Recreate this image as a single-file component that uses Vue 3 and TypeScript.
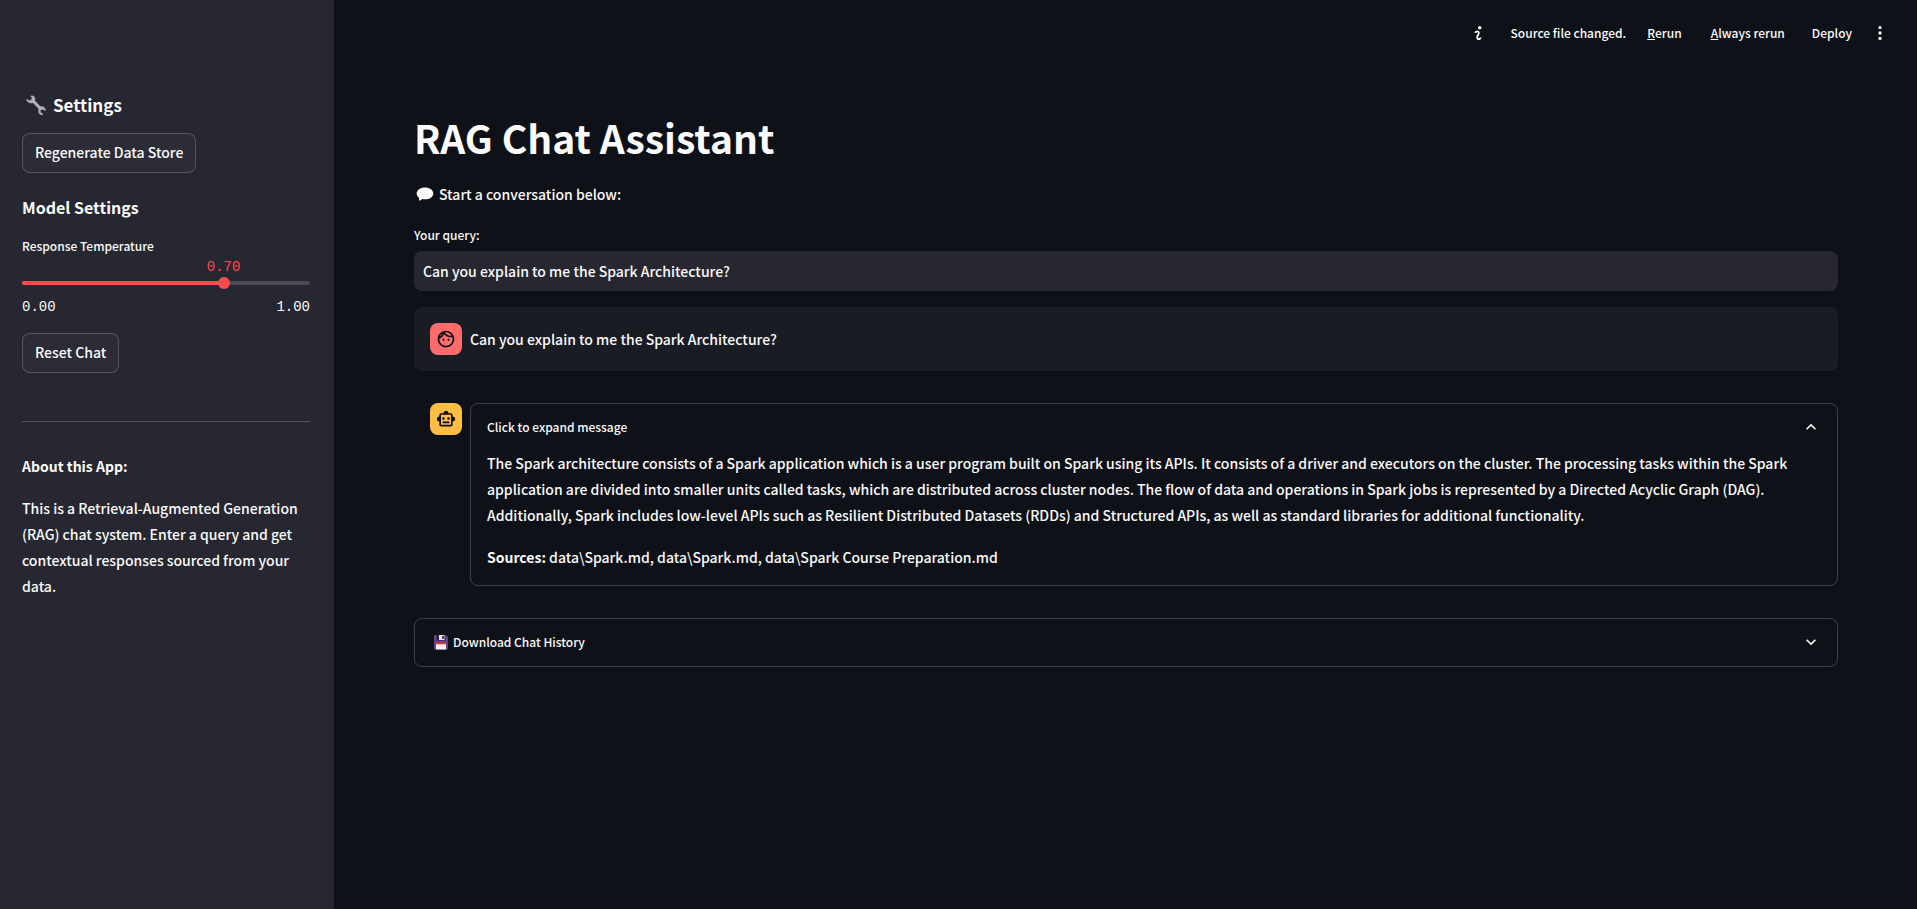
<script setup lang="ts">
import { computed, ref } from 'vue'

const temperature = ref(0.7)
const query = ref('Can you explain to me the Spark Architecture?')
const question = 'Can you explain to me the Spark Architecture?'
const answer =
  'The Spark architecture consists of a Spark application which is a user program built on Spark using its APIs. It consists of a driver and executors on the cluster. The processing tasks within the Spark application are divided into smaller units called tasks, which are distributed across cluster nodes. The flow of data and operations in Spark jobs is represented by a Directed Acyclic Graph (DAG). Additionally, Spark includes low-level APIs such as Resilient Distributed Datasets (RDDs) and Structured APIs, as well as standard libraries for additional functionality.'
const sources = ['data\\Spark.md', 'data\\Spark.md', 'data\\Spark Course Preparation.md']

const fill = computed(() => `${temperature.value * 100}%`)
const sourceList = sources.join(', ')
</script>

<template>
  <div class="app">
    <aside class="sidebar">
      <h2 class="side-title">
        <svg class="wrench" viewBox="0 0 20 20" aria-hidden="true">
          <path
            d="M5.4 0.4C7.6 0.2 9.4 1.8 9.2 4.2L8.9 5.5L14.3 11.3C16.6 10.7 19.2 12.2 19.8 14.6L19.4 16L17.2 14.4L14.7 15L14.6 17.2L17.2 18.8L16.4 19.9C13.9 20 11.9 18 12.4 15.4L12.5 13.8L6.9 7.9C4.3 9 1.1 7.6 0.4 4.8L0.9 3.8L3.2 5.4L5.5 4.6L5.8 2.7L4.4 1.3Z"
          />
        </svg>
        Settings
      </h2>
      <button class="btn" type="button">Regenerate Data Store</button>

      <h3 class="side-subtitle">Model Settings</h3>
      <label class="field-label" for="temperature">Response Temperature</label>
      <div class="slider">
        <output class="slider-value" for="temperature" :style="{ left: fill }">{{ temperature.toFixed(2) }}</output>
        <div class="rail"><div class="rail-fill" :style="{ width: fill }"></div></div>
        <input id="temperature" v-model.number="temperature" type="range" min="0" max="1" step="0.01" />
      </div>
      <div class="bounds"><span>0.00</span><span>1.00</span></div>
      <button class="btn" type="button">Reset Chat</button>

      <hr class="divider" />
      <p class="about-title"><strong>About this App:</strong></p>
      <p class="about">
        This is a Retrieval-Augmented Generation (RAG) chat system. Enter a query and get contextual responses sourced
        from your data.
      </p>
    </aside>

    <div class="page">
      <header class="toolbar">
        <svg class="info" viewBox="0 0 8 8" aria-hidden="true">
          <path
            d="M5 0c-.55 0-1 .45-1 1s.45 1 1 1 1-.45 1-1-.45-1-1-1zm-1.500 2.500c-.83 0-1.500.67-1.500 1.500h1c0-.28.22-.5.5-.5s.5.22.5.5-1 1.640-1 2.500c0 .86.67 1.500 1.500 1.500s1.500-.67 1.500-1.500h-1c0 .28-.22.5-.5.5s-.5-.22-.5-.5c0-.36 1-1.840 1-2.500 0-.81-.67-1.500-1.500-1.500z"
          />
        </svg>
        <span class="status">Source file changed.</span>
        <button class="tool rerun" type="button"><u>R</u>erun</button>
        <button class="tool always" type="button"><u>A</u>lways rerun</button>
        <button class="tool deploy" type="button">Deploy</button>
        <button class="tool" type="button" aria-label="Main menu">
          <svg class="dots" viewBox="0 0 24 24" aria-hidden="true">
            <circle cx="12" cy="5.500" r="2" />
            <circle cx="12" cy="12" r="2" />
            <circle cx="12" cy="18.500" r="2" />
          </svg>
        </button>
      </header>

      <main class="content">
        <h1 class="title">RAG Chat Assistant</h1>
        <p class="intro">
          <svg class="bubble" viewBox="0 0 18 14" aria-hidden="true">
            <path
              d="M9 0.400C13.700 0.400 17.300 3 17.300 6.400C17.300 9.800 13.700 12.300 9 12.300C7.900 12.300 6.900 12.200 6 11.900C5.200 12.900 4.100 13.500 2.800 13.600C3.200 12.700 3.300 11.700 3 10.700C1.500 9.600 0.700 8.100 0.700 6.400C0.700 3 4.300 0.400 9 0.400Z"
            />
          </svg>
          Start a conversation below:
        </p>

        <label class="field-label" for="query">Your query:</label>
        <input id="query" v-model="query" class="query" type="text" />

        <section class="message user">
          <div class="avatar avatar-user">
            <svg viewBox="0 0 24 24" aria-hidden="true">
              <path
                d="M10.250 13c0 .69-.56 1.250-1.250 1.250S7.750 13.690 7.750 13 8.310 11.750 9 11.750s1.250.56 1.250 1.250zM15 11.750c-.69 0-1.250.56-1.250 1.250s.56 1.250 1.250 1.250 1.250-.56 1.250-1.250-.56-1.250-1.250-1.250zm7 .25c0 5.520-4.480 10-10 10S2 17.520 2 12 6.480 2 12 2s10 4.480 10 10zM10.660 4.120C12.060 6.440 14.600 8 17.500 8c.46 0 .91-.05 1.340-.12C17.440 5.560 14.900 4 12 4c-.46 0-.91.05-1.340.12zM4.420 9.470a8.046 8.046 0 0 0 3.660-4.440 8.046 8.046 0 0 0-3.660 4.440zM20 12c0-.78-.12-1.530-.33-2.240-.7.15-1.420.24-2.170.24a10 10 0 0 1-7.760-3.690A10.016 10.016 0 0 1 4 11.860c.01.04 0 .09 0 .14 0 4.410 3.590 8 8 8s8-3.590 8-8z"
              />
            </svg>
          </div>
          <p class="message-text">{{ question }}</p>
        </section>

        <section class="message">
          <div class="avatar avatar-bot">
            <svg viewBox="0 0 24 24" aria-hidden="true">
              <path
                d="M20 9V7c0-1.100-.9-2-2-2h-3c0-1.660-1.340-3-3-3S9 3.340 9 5H6c-1.100 0-2 .9-2 2v2c-1.660 0-3 1.340-3 3s1.340 3 3 3v4c0 1.100.9 2 2 2h12c1.100 0 2-.9 2-2v-4c1.660 0 3-1.340 3-3s-1.340-3-3-3zm-2 10H6V7h12v12zM9 13c-.83 0-1.500-.67-1.500-1.500S8.170 10 9 10s1.500.67 1.500 1.500S9.830 13 9 13zm7.500-1.500c0 .83-.67 1.500-1.500 1.500s-1.500-.67-1.500-1.500.67-1.500 1.500-1.500 1.500.67 1.500 1.500zM8 15h8v2H8v-2z"
              />
            </svg>
          </div>
          <details class="expander" open>
            <summary>
              <span>Click to expand message</span>
              <svg class="chevron" viewBox="0 0 24 24" aria-hidden="true">
                <path d="M16.590 8.590 12 13.170 7.410 8.590 6 10l6 6 6-6z" />
              </svg>
            </summary>
            <div class="expander-body">
              <p>{{ answer }}</p>
              <p><strong>Sources:</strong> {{ sourceList }}</p>
            </div>
          </details>
        </section>

        <details class="expander">
          <summary>
            <span class="download">
              <svg class="floppy" viewBox="0 0 14 16" aria-hidden="true">
                <path fill="#5b4a85" d="M1 1H12L14 3V15.500H0V2Z" />
                <path fill="#321b41" d="M2.500 1H11.500V6.500H2.500Z" />
                <path fill="#e6e6e6" d="M5 1H10.500V6H5Z" />
                <path fill="#321b41" d="M8.200 2H9.800V5H8.200Z" />
                <path fill="#f4f4f4" d="M2 9H12V15.500H2Z" />
                <path fill="#f8312f" d="M2 8.500H12V10.300H2Z" />
              </svg>
              Download Chat History
            </span>
            <svg class="chevron" viewBox="0 0 24 24" aria-hidden="true">
              <path d="M16.590 8.590 12 13.170 7.410 8.590 6 10l6 6 6-6z" />
            </svg>
          </summary>
        </details>
      </main>
    </div>
  </div>
</template>

<style>
body {
  margin: 0;
  background: #0e1117;
}
</style>

<style scoped>
.app {
  display: flex;
  min-height: 100vh;
  background: #0e1117;
  color: #fafafa;
  font-family: "Noto Sans CJK SC", "Noto Sans", sans-serif;
  font-size: 14px;
  font-weight: 500;
  line-height: 26px;
}
.app *,
.app {
  box-sizing: border-box;
}
h1,
h2,
h3,
p {
  margin: 0;
}
svg {
  flex: none;
  fill: currentColor;
}
button,
input {
  color: inherit;
  font: inherit;
}
strong {
  font-weight: 700;
}

/* Sidebar */
.sidebar {
  flex: none;
  width: 334px;
  padding: 93px 24px 24px 22px;
  background: #262730;
}
.side-title {
  display: flex;
  align-items: center;
  gap: 7px;
  margin-bottom: 16px;
  padding-left: 4px;
  font-size: 17px;
  font-weight: 700;
  line-height: 24px;
}
.wrench {
  width: 20px;
  height: 20px;
  color: #b4acbc;
}
.btn {
  display: block;
  height: 40px;
  padding: 0 12px 2px;
  border: 1px solid rgba(250, 250, 250, 0.2);
  border-radius: 8px;
  background: #2b2c36;
  cursor: pointer;
}
.side-subtitle {
  margin: 22px 0 15px;
  font-size: 16px;
  font-weight: 600;
  line-height: 24px;
}
.field-label {
  display: block;
  font-size: 12px;
  line-height: 24px;
}
.slider {
  position: relative;
  height: 34px;
  padding-top: 23px;
}
.slider-value {
  position: absolute;
  top: 1px;
  transform: translateX(-50%);
  color: #ff4b4b;
  font: 14px/16px "Liberation Mono", monospace;
}
.rail {
  height: 4px;
  border-radius: 4px;
  background: #4a4b56;
}
.rail-fill {
  height: 4px;
  border-radius: 4px;
  background: #ff4b4b;
}
.slider input {
  position: absolute;
  top: 19px;
  left: -6px;
  width: calc(100% + 12px);
  height: 12px;
  margin: 0;
  appearance: none;
  background: transparent;
}
.slider input::-webkit-slider-thumb {
  width: 12px;
  height: 12px;
  border-radius: 50%;
  appearance: none;
  background: #ff4b4b;
}
.bounds {
  display: flex;
  justify-content: space-between;
  margin: 7px 0 17px;
  font: 14px/17px "Liberation Mono", monospace;
}
.divider {
  height: 1px;
  margin: 48px 0 32px;
  border: 0;
  background: rgba(250, 250, 250, 0.2);
}
.about-title {
  margin-bottom: 16px;
  line-height: 25px;
}

/* Main column */
.page {
  flex: 1;
  min-width: 0;
}
.toolbar {
  display: flex;
  align-items: center;
  justify-content: flex-end;
  height: 66px;
  padding-right: 27px;
  font-size: 12px;
}
.info {
  width: 14px;
  height: 14px;
  margin-right: 26px;
}
.tool {
  display: flex;
  align-items: center;
  padding: 0;
  border: 0;
  background: none;
  cursor: pointer;
}
.rerun {
  margin-left: 21px;
}
.always {
  margin-left: 29px;
}
.deploy {
  margin: 0 18px 0 27px;
}
.dots {
  width: 20px;
  height: 20px;
}
.content {
  padding: 44px 79px 80px 80px;
}
.title {
  margin-bottom: 17px;
  font-size: 39px;
  font-weight: 700;
  line-height: 54px;
}
.intro {
  display: flex;
  align-items: center;
  gap: 5px;
  margin-bottom: 16px;
  padding-left: 2px;
}
.bubble {
  width: 18px;
  height: 14px;
}
.query {
  display: block;
  width: 100%;
  height: 40px;
  margin: 4px 0 16px;
  padding: 0 9px;
  border: 0;
  border-radius: 8px;
  background: #262730;
}
.message {
  display: flex;
  align-items: flex-start;
  gap: 8px;
  padding: 16px 0 16px 16px;
  border-radius: 8px;
}
.user {
  margin-bottom: 16px;
  background: #1a1c24;
}
.message-text {
  line-height: 32px;
}
.avatar {
  display: flex;
  flex: none;
  align-items: center;
  justify-content: center;
  width: 32px;
  height: 32px;
  border-radius: 8px;
  color: #0e1117;
}
.avatar svg {
  width: 20px;
  height: 20px;
}
.avatar-user {
  background: #ff6c6c;
}
.avatar-bot {
  background: #ffbd45;
}
.expander {
  flex: 1;
  min-width: 0;
  border: 1px solid rgba(250, 250, 250, 0.2);
  border-radius: 8px;
}
.content > .expander {
  margin-top: 16px;
}
.expander summary {
  display: flex;
  align-items: center;
  justify-content: space-between;
  height: 47px;
  padding: 0 16px 1px;
  font-size: 12px;
  list-style: none;
  cursor: pointer;
}
.chevron {
  width: 20px;
  height: 20px;
}
.expander[open] .chevron {
  transform: rotate(180deg);
}
.expander-body {
  margin-top: -1px;
  padding: 0 40px 15px 16px;
}
.expander-body p + p {
  margin-top: 16px;
}
.download {
  display: flex;
  align-items: center;
  gap: 5px;
  padding-left: 3px;
}
.floppy {
  width: 14px;
  height: 16px;
}
</style>
